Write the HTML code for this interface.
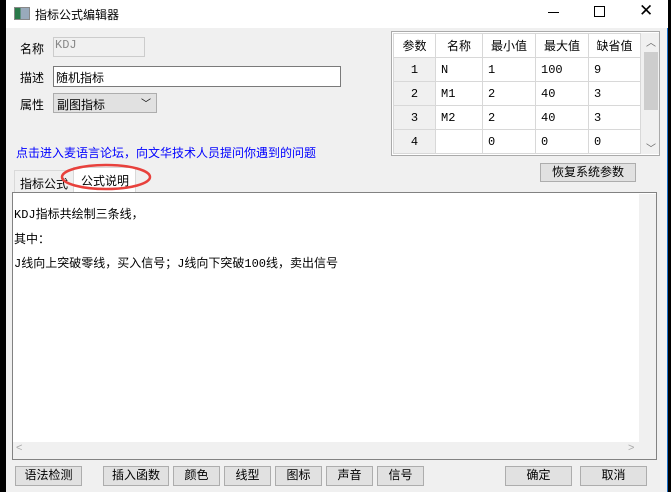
<!DOCTYPE html><html><head><meta charset="utf-8"><style>
*{box-sizing:border-box;margin:0;padding:0}
body{width:671px;height:492px;background:#000;position:relative;overflow:hidden;font-family:"Liberation Sans","Noto Sans CJK SC","WenQuanYi Zen Hei",sans-serif;font-size:12px;color:#000}
.a{position:absolute;white-space:nowrap}
#win{left:6px;top:0;width:662px;height:492px;background:#f0f0f0;border-right:1px solid #1a6fc9}
.btn{position:absolute;background:#e1e1e1;border:1px solid #adadad;text-align:center;line-height:17px;font-size:12px}
table{border-collapse:collapse;position:absolute;left:393px;top:33px;background:#fff}
td{border:1px solid #d8d8d8;height:24px;font-size:12px;padding-left:5px;font-family:"Liberation Mono","Noto Sans CJK SC",monospace}
tr:first-child td{font-family:"Liberation Sans","Noto Sans CJK SC",sans-serif;font-size:12px;text-align:center;padding:0}
td.h{text-align:center;background:#f0f0f0;padding:0}
</style></head><body>
<div class="a" style="left:0;top:0;width:6px;height:492px;background:#000"></div>
<div class="a" id="win"></div>
<div class="a" style="left:6px;top:0;width:662px;height:28px;background:#fff"></div>
<div class="a" style="left:14px;top:7px;width:16px;height:13px;border:1px solid #888;background:linear-gradient(90deg,#2a7a4a 40%,#9ab 40%)"></div>
<div class="a" style="left:35px;top:6px;font-size:12px">指标公式编辑器</div>
<div class="a" style="left:548px;top:12px;width:11px;height:1px;background:#000"></div>
<div class="a" style="left:594px;top:6px;width:11px;height:11px;border:1px solid #000"></div>
<div class="a" style="left:639px;top:1px;font-size:17px">✕</div>

<div class="a" style="left:20px;top:40px">名称</div>
<div class="a" style="left:53px;top:37px;width:92px;height:20px;border:1px solid #ccc;background:#f0f0f0;color:#888;font-family:'Liberation Mono',monospace;padding-left:1px">KDJ</div>
<div class="a" style="left:20px;top:69px">描述</div>
<div class="a" style="left:53px;top:66px;width:288px;height:21px;border:1px solid #7a7a7a;background:#fff;padding:2px 2px">随机指标</div>
<div class="a" style="left:20px;top:96px">属性</div>
<div class="a" style="left:53px;top:93px;width:104px;height:20px;border:1px solid #adadad;background:#e1e1e1;padding:2px 3px">副图指标<span style="position:absolute;right:5px;top:1px;font-size:10px">﹀</span></div>
<div class="a" style="left:16px;top:144px;color:#0000ff">点击进入麦语言论坛，向文华技术人员提问你遇到的问题</div>

<div class="a" style="left:391px;top:31px;width:269px;height:125px;border:1px solid #aaa;background:#fff"></div>
<table>
<tr><td style="width:42px">参数</td><td style="width:47px">名称</td><td style="width:53px">最小值</td><td style="width:53px">最大值</td><td style="width:52px">缺省值</td></tr>
<tr><td class="h">1</td><td>N</td><td>1</td><td>100</td><td>9</td></tr>
<tr><td class="h">2</td><td>M1</td><td>2</td><td>40</td><td>3</td></tr>
<tr><td class="h">3</td><td>M2</td><td>2</td><td>40</td><td>3</td></tr>
<tr><td class="h">4</td><td></td><td>0</td><td>0</td><td>0</td></tr>
</table>
<div class="a" style="left:641px;top:33px;width:18px;height:121px;background:#f0f0f0"></div>
<div class="a" style="left:644px;top:52px;width:14px;height:58px;background:#cdcdcd"></div>
<div class="a" style="left:646px;top:34px;font-size:10px;color:#666">︿</div>
<div class="a" style="left:646px;top:140px;font-size:10px;color:#666">﹀</div>
<div class="btn" style="left:540px;top:163px;width:96px;height:19px">恢复系统参数</div>

<div class="a" style="left:14px;top:170px;width:60px;height:22px;border:1px solid #d9d9d9;border-bottom:none;padding:4px 5px">指标公式</div>
<div class="a" style="left:73px;top:167px;width:63px;height:25px;background:#fff;border:1px solid #d9d9d9;border-bottom:none;padding:4px 7px">公式说明</div>
<svg class="a" style="left:60px;top:160px" width="94" height="32"><ellipse cx="46" cy="17" rx="44" ry="12" fill="none" stroke="#e8413c" stroke-width="2.5"/></svg>

<div class="a" style="left:12px;top:192px;width:645px;height:268px;border:1px solid #828282;background:#fff"></div>
<div class="a" style="left:14px;top:203px;font-size:12px;line-height:24.5px;font-family:'Liberation Mono','Noto Sans CJK SC',monospace">KDJ指标共绘制三条线，<br>其中：<br>J线向上突破零线，买入信号；J线向下突破100线，卖出信号</div>
<div class="a" style="left:639px;top:194px;width:17px;height:248px;background:#f0f0f0"></div>
<div class="a" style="left:13px;top:442px;width:643px;height:17px;background:#f0f0f0"></div>
<div class="a" style="left:16px;top:442px;color:#aaa;font-size:11px">&lt;</div>
<div class="a" style="left:628px;top:442px;color:#aaa;font-size:11px">&gt;</div>

<div class="btn" style="left:15px;top:466px;width:67px;height:20px">语法检测</div>
<div class="btn" style="left:103px;top:466px;width:66px;height:20px">插入函数</div>
<div class="btn" style="left:173px;top:466px;width:47px;height:20px">颜色</div>
<div class="btn" style="left:224px;top:466px;width:47px;height:20px">线型</div>
<div class="btn" style="left:275px;top:466px;width:47px;height:20px">图标</div>
<div class="btn" style="left:326px;top:466px;width:47px;height:20px">声音</div>
<div class="btn" style="left:377px;top:466px;width:47px;height:20px">信号</div>
<div class="btn" style="left:505px;top:466px;width:67px;height:20px">确定</div>
<div class="btn" style="left:580px;top:466px;width:67px;height:20px">取消</div>
</body></html>
